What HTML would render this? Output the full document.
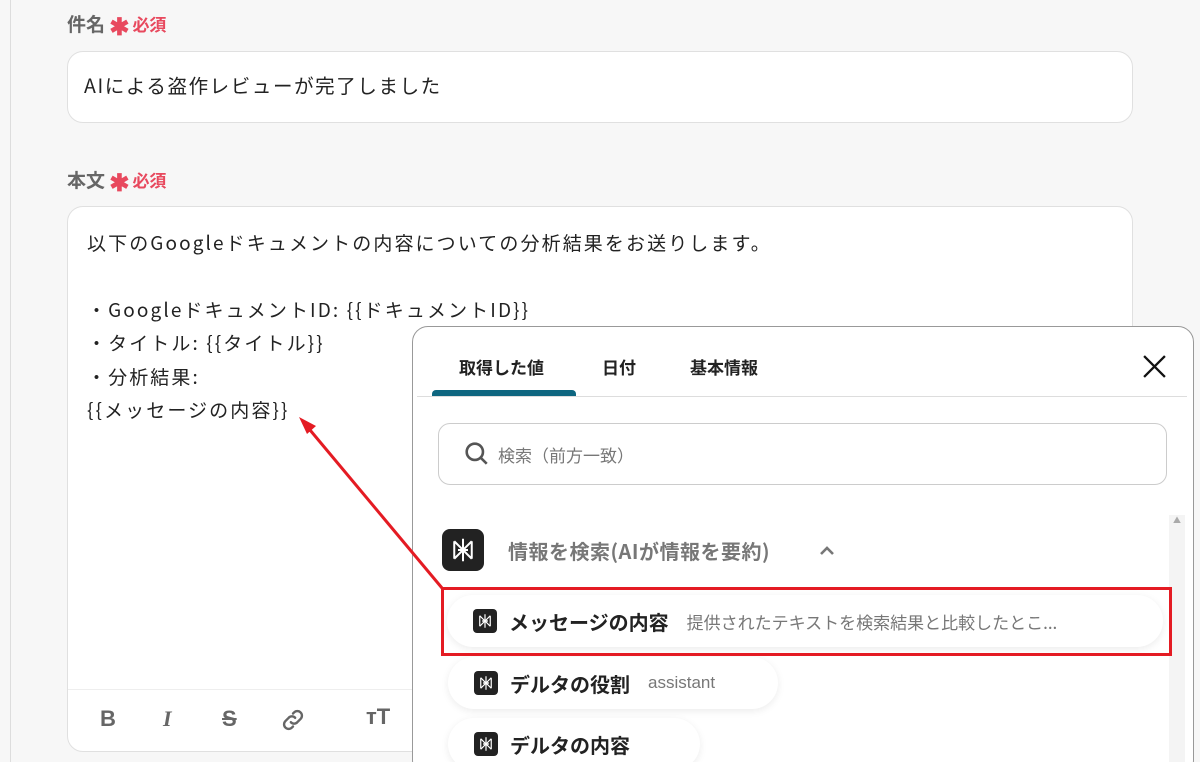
<!DOCTYPE html>
<html><head><meta charset="utf-8"><style>
*{box-sizing:border-box;margin:0;padding:0}
html,body{width:1200px;height:762px;overflow:hidden}
body{background:#f7f7f7;font-family:"Noto Sans CJK JP","Liberation Sans",sans-serif;position:relative;color:#222}
.abs{position:absolute}
.lbl{font-size:19px;color:#666;font-weight:bold}
.req{color:#e8495e;font-size:17px}
.ast{font-size:24px;vertical-align:-4px;margin-right:3px}
.field{background:#fff;border:1px solid #e0e0e0;border-radius:16px}
.item{position:absolute;background:#fff;border-radius:27px;box-shadow:0 2px 8px rgba(0,0,0,.08);display:flex;align-items:center;padding-left:26px;height:52px}
.ic{width:24px;height:24px;background:#222;border-radius:4px;margin-right:12px;display:flex;align-items:center;justify-content:center}
.nm{font-size:20px;font-weight:bold;color:#222}
.ds{font-size:17px;color:#777;margin-left:18px}
</style></head><body>
<svg width="0" height="0" style="position:absolute"><defs><symbol id="lg" viewBox="0 0 24 24"><g fill="none" stroke="#fff" stroke-width="1.6"><path d="M12 3V21M5 5L12 12L19 5M5 19L12 12L19 19M5 5V19M19 5V19M8 12H16"/></g></symbol></defs></svg>
<div class="abs" style="left:10px;top:0;width:1px;height:762px;background:#ddd"></div>
<div class="abs lbl" style="left:67px;top:7px">件名 <span class="req"><span class="ast">✱</span>必須</span></div>
<div class="abs field" style="left:67px;top:51px;width:1066px;height:72px"></div>
<div class="abs" style="left:84px;top:70px;font-size:19.5px;letter-spacing:1.6px">AIによる盗作レビューが完了しました</div>
<div class="abs lbl" style="left:67px;top:163px">本文 <span class="req"><span class="ast">✱</span>必須</span></div>
<div class="abs field" style="left:67px;top:206px;width:1066px;height:546px"></div>
<div class="abs" style="left:68px;top:689px;width:1064px;height:1px;background:#eee"></div>
<div class="abs" style="left:87px;top:226px;font-size:19px;line-height:33.4px;letter-spacing:2.1px;color:#222">以下のGoogleドキュメントの内容についての分析結果をお送りします。<br><br>・GoogleドキュメントID: {{ドキュメントID}}<br>・タイトル: {{タイトル}}<br>・分析結果:<br>{{メッセージの内容}}</div>
<div class="abs" style="left:100px;top:706px;font-size:22px;font-weight:bold;color:#666;font-family:'Liberation Sans',sans-serif">B</div>
<div class="abs" style="left:163px;top:706px;font-size:22px;font-weight:bold;font-style:italic;color:#666;font-family:'Liberation Serif',serif">I</div>
<div class="abs" style="left:222px;top:706px;font-size:22px;font-weight:bold;color:#666;text-decoration:line-through;font-family:'Liberation Sans',sans-serif">S</div>
<svg class="abs" style="left:280px;top:707px" width="26" height="26" viewBox="0 0 24 24" fill="none" stroke="#666" stroke-width="2.2" stroke-linecap="round"><path d="M10 14a4 4 0 0 0 6 0l3-3a4 4 0 0 0-6-6l-1 1"/><path d="M14 10a4 4 0 0 0-6 0l-3 3a4 4 0 0 0 6 6l1-1"/></svg>
<div class="abs" style="left:366px;top:704px;font-size:22px;font-weight:bold;color:#666;font-family:'Liberation Sans',sans-serif">ᴛT</div>

<div class="abs" style="left:412px;top:326px;width:782px;height:450px;background:#fff;border:1px solid #999;border-radius:16px"></div>
<div class="abs" style="left:459px;top:354px;font-size:17px;font-weight:bold;color:#222">取得した値</div>
<div class="abs" style="left:602px;top:354px;font-size:17px;font-weight:bold;color:#222">日付</div>
<div class="abs" style="left:690px;top:354px;font-size:17px;font-weight:bold;color:#222">基本情報</div>
<div class="abs" style="left:432px;top:390px;width:144px;height:6px;background:#0e6680;border-radius:4px 4px 0 0"></div>
<div class="abs" style="left:417px;top:396px;width:770px;height:1px;background:#ddd"></div>
<svg class="abs" style="left:1142px;top:354px" width="25" height="25" viewBox="0 0 24 24" stroke="#111" stroke-width="2.2"><path d="M2 2L22 22M22 2L2 22"/></svg>
<div class="abs" style="left:438px;top:423px;width:729px;height:62px;border:1px solid #ccc;border-radius:12px"></div>
<svg class="abs" style="left:464px;top:441px" width="26" height="26" viewBox="0 0 24 24" fill="none" stroke="#555" stroke-width="2.4"><circle cx="10" cy="10" r="7.5"/><path d="M15.5 15.5L21 21"/></svg>
<div class="abs" style="left:498px;top:442px;font-size:17px;color:#777">検索（前方一致）</div>
<div class="abs" style="left:1169px;top:515px;width:16px;height:247px;background:#f4f4f4"></div>
<div class="abs" style="left:1173px;top:515px;font-size:8px;color:#aaa">▲</div>
<div class="abs" style="left:442px;top:529px;width:42px;height:42px;background:#222;border-radius:8px;display:flex;align-items:center;justify-content:center"><svg width="30" height="30"><use href="#lg"/></svg></div>
<div class="abs" style="left:508px;top:536px;font-size:20px;font-weight:bold;color:#777;letter-spacing:0.5px">情報を検索(AIが情報を要約)</div>
<svg class="abs" style="left:818px;top:543px" width="18" height="14" viewBox="0 0 18 14" fill="none" stroke="#777" stroke-width="2.6"><path d="M3 11L9 5L15 11"/></svg>

<div class="item" style="left:447px;top:595px;width:716px"><div class="ic"><svg width="18" height="18"><use href="#lg"/></svg></div><span class="nm">メッセージの内容</span><span class="ds">提供されたテキストを検索結果と比較したとこ...</span></div>
<div class="item" style="left:448px;top:657px;width:330px"><div class="ic"><svg width="18" height="18"><use href="#lg"/></svg></div><span class="nm">デルタの役割</span><span class="ds" style="font-family:'Liberation Sans',sans-serif">assistant</span></div>
<div class="item" style="left:448px;top:718px;width:252px"><div class="ic"><svg width="18" height="18"><use href="#lg"/></svg></div><span class="nm">デルタの内容</span></div>
<div class="abs" style="left:441px;top:587px;width:731px;height:69px;border:3px solid #e41b23"></div>
<svg class="abs" style="left:0;top:0" width="1200" height="762"><path d="M442 588L305 424" stroke="#e41b23" stroke-width="3"/><path d="M299 417L316 426L307 434Z" fill="#e41b23"/></svg>
</body></html>
